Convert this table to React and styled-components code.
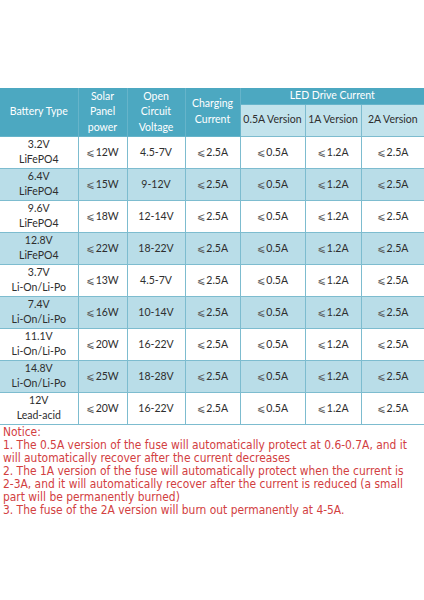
import React from "react";
import styled, { createGlobalStyle } from "styled-components";

const Global = createGlobalStyle`
  html, body { margin: 0; padding: 0; background: #fff; }
  body { width: 424px; height: 600px; overflow: hidden; }
`;

const Page = styled.div`
  width: 424px;
  padding-top: 88px;
  box-sizing: border-box;
`;

const Table = styled.table`
  width: 424px;
  border-collapse: collapse;
  table-layout: fixed;
  font-family: Lato, "Open Sans", sans-serif;
  font-size: 10.5px;
  color: #2e2e2e;
`;

const HeadCell = styled.th`
  background: ${(p) => (p.$light ? "#c2e3ec" : "#4ca8c1")};
  color: ${(p) => (p.$light ? "#2e2e2e" : "#ffffff")};
  font-weight: normal;
  line-height: 15.5px;
  padding: 0;
  height: ${(p) => p.$h}px;
  border: 1px solid ${(p) => (p.$light ? "#7dbccf" : "#66b4ca")};
  border-top: none;
  text-align: center;
  vertical-align: middle;
  &:first-child { border-left: none; }
  &:last-child { border-right: none; }
`;

const Row = styled.tr`
  background: ${(p) => (p.$alt ? "#b9dde8" : "#ffffff")};
`;

const Cell = styled.td`
  height: 31px;
  padding: 0;
  line-height: 15px;
  text-align: center;
  vertical-align: middle;
  border: 1px solid #7dbccf;
  &:first-child { border-left: none; }
  &:last-child { border-right: none; }
`;

const Le = styled.span`
  font-family: "DejaVu Sans", sans-serif;
  font-size: 10px;
  color: #555;
  margin-right: 1px;
`;

const Notice = styled.div`
  font-family: "DejaVu Sans Condensed", "DejaVu Sans", sans-serif;
  font-size: 11.9px;
  line-height: 13.1px;
  color: #d2403f;
  padding: 1px 0 0 3px;
`;

const NoWrap = styled.span`
  white-space: nowrap;
`;

const cols = [78, 49, 58, 55, 65, 56, 63];

const rows = [
  ["3.2V", "LiFePO4", "12W", "4.5-7V"],
  ["6.4V", "LiFePO4", "15W", "9-12V"],
  ["9.6V", "LiFePO4", "18W", "12-14V"],
  ["12.8V", "LiFePO4", "22W", "18-22V"],
  ["3.7V", "Li-On/Li-Po", "13W", "4.5-7V"],
  ["7.4V", "Li-On/Li-Po", "16W", "10-14V"],
  ["11.1V", "Li-On/Li-Po", "20W", "16-22V"],
  ["14.8V", "Li-On/Li-Po", "25W", "18-28V"],
  ["12V", "Lead-acid", "20W", "16-22V"],
];

const LE = () => <Le>⩽</Le>;

export default function App() {
  return (
    <>
      <Global />
      <Page>
        <Table>
          <colgroup>
            {cols.map((w, i) => (
              <col key={i} style={{ width: w }} />
            ))}
          </colgroup>
          <thead>
            <tr>
              <HeadCell rowSpan={2} $h={47}>Battery Type</HeadCell>
              <HeadCell rowSpan={2} $h={47}>Solar<br />Panel<br />power</HeadCell>
              <HeadCell rowSpan={2} $h={47}>Open<br />Circuit<br />Voltage</HeadCell>
              <HeadCell rowSpan={2} $h={47}>Charging<br />Current</HeadCell>
              <HeadCell colSpan={3} $h={15}>LED Drive Current</HeadCell>
            </tr>
            <tr>
              <HeadCell $light $h={31}>0.5A Version</HeadCell>
              <HeadCell $light $h={31}>1A Version</HeadCell>
              <HeadCell $light $h={31}>2A Version</HeadCell>
            </tr>
          </thead>
          <tbody>
            {rows.map((r, i) => (
              <Row key={i} $alt={i % 2 === 1}>
                <Cell>{r[0]}<br />{r[1]}</Cell>
                <Cell><LE />{r[2]}</Cell>
                <Cell>{r[3]}</Cell>
                <Cell><LE />2.5A</Cell>
                <Cell><LE />0.5A</Cell>
                <Cell><LE />1.2A</Cell>
                <Cell><LE />2.5A</Cell>
              </Row>
            ))}
          </tbody>
        </Table>
        <Notice>
          Notice:<br />
          1. The 0.5A version of the fuse will automatically protect at <NoWrap>0.6-0.7A</NoWrap>, and it will automatically recover after the current decreases<br />
          2. The 1A version of the fuse will automatically protect when the current is <NoWrap>2-3A</NoWrap>, and it will automatically recover after the current is reduced (a small part will be permanently burned)<br />
          3. The fuse of the 2A version will burn out permanently at <NoWrap>4-5A</NoWrap>.
        </Notice>
      </Page>
    </>
  );
}
